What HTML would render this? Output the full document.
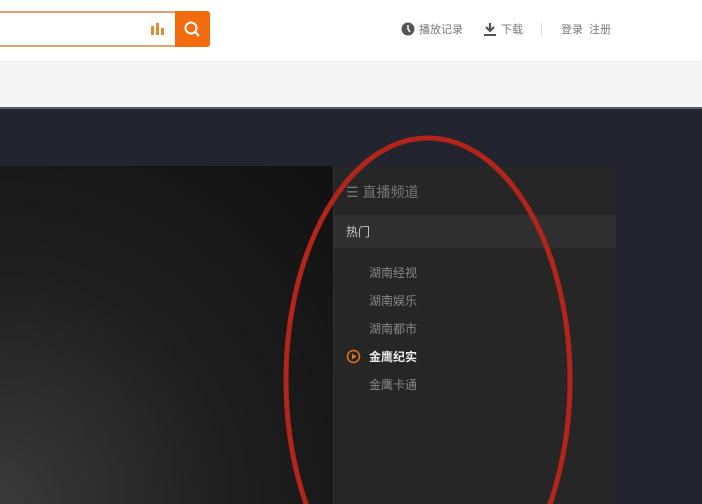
<!DOCTYPE html><html><head><meta charset="utf-8"><style>
body{margin:0;width:702px;height:504px;overflow:hidden;position:relative;background:#22252f;font-family:"Liberation Sans","Noto Sans CJK SC",sans-serif}
div{position:absolute;box-sizing:border-box}
.t{font-size:12px;color:#888}
</style></head><body>
<div style="left:0;top:0;width:702px;height:62px;background:#fff;border-bottom:1px solid #eee"></div>
<div style="left:0;top:62px;width:702px;height:47px;background:#f5f5f6;border-bottom:2px solid #5a5d66"></div>
<div style="left:-10px;top:11px;width:186px;height:36px;border:2px solid #e0a468;border-right:none;border-radius:3px 0 0 3px;background:#fff"></div>
<div style="left:151px;top:23px;width:14px;height:12px">
<div style="left:0;top:3px;width:3px;height:9px;background:#e08b2d"></div><div style="left:5px;top:0;width:3px;height:12px;background:#e08b2d"></div><div style="left:10px;top:5px;width:3px;height:7px;background:#e08b2d"></div></div>
<div style="left:175px;top:11px;width:35px;height:36px;background:#f26b0f;border-radius:0 3px 3px 0"></div>
<svg style="position:absolute;left:183px;top:20px" width="18" height="18"><circle cx="8" cy="8" r="5.5" fill="none" stroke="#fff" stroke-width="2"/><path d="M12 12l4 4" stroke="#fff" stroke-width="2"/></svg>
<svg style="position:absolute;left:401px;top:22px" width="14" height="14"><circle cx="7" cy="7" r="6.5" fill="#555"/><path d="M7 3v4l2 3" stroke="#fff" stroke-width="1.5" fill="none"/></svg>
<div class="t" style="left:419px;top:21px;font-size:11px;color:#777">播放记录</div>
<svg style="position:absolute;left:483px;top:22px" width="14" height="14"><path d="M7 1v8M3 5l4 4 4-4" stroke="#555" stroke-width="2.2" fill="none"/><path d="M1 13h12" stroke="#555" stroke-width="2"/></svg>
<div class="t" style="left:501px;top:21px;font-size:11px;color:#777">下载</div>
<div style="left:541px;top:23px;width:1px;height:12px;background:#ddd"></div>
<div class="t" style="left:561px;top:21px;font-size:11px;color:#777">登录&nbsp;&nbsp;注册</div>
<div style="left:0;top:166px;width:334px;height:338px;background:radial-gradient(ellipse at 0% 100%,#3a3a3a 0%,#1e1e1e 50%,#111 100%)"></div>
<div style="left:333px;top:166px;width:283px;height:338px;background:#262626;border-left:1px solid #333"></div>
<div class="t" style="left:346px;top:182px;font-size:14px;color:#777">☰ 直播频道</div>
<div style="left:334px;top:215px;width:282px;height:33px;background:#303030"></div>
<div class="t" style="left:346px;top:223px;color:#ccc">热门</div>
<div class="t" style="left:369px;top:264px">湖南经视</div>
<div class="t" style="left:369px;top:292px">湖南娱乐</div>
<div class="t" style="left:369px;top:320px">湖南都市</div>
<svg style="position:absolute;left:346px;top:349px" width="15" height="15"><circle cx="7.5" cy="7.5" r="6" fill="none" stroke="#e5701e" stroke-width="1.5"/><path d="M6 4.5v6l4.5-3z" fill="#e5701e"/></svg>
<div class="t" style="left:369px;top:348px;color:#eee;font-weight:bold">金鹰纪实</div>
<div class="t" style="left:369px;top:376px">金鹰卡通</div>
<svg style="position:absolute;left:0;top:0" width="702" height="504"><ellipse cx="428" cy="380" rx="142" ry="242" fill="none" stroke="#b3241a" stroke-width="5"/></svg>
</body></html>
